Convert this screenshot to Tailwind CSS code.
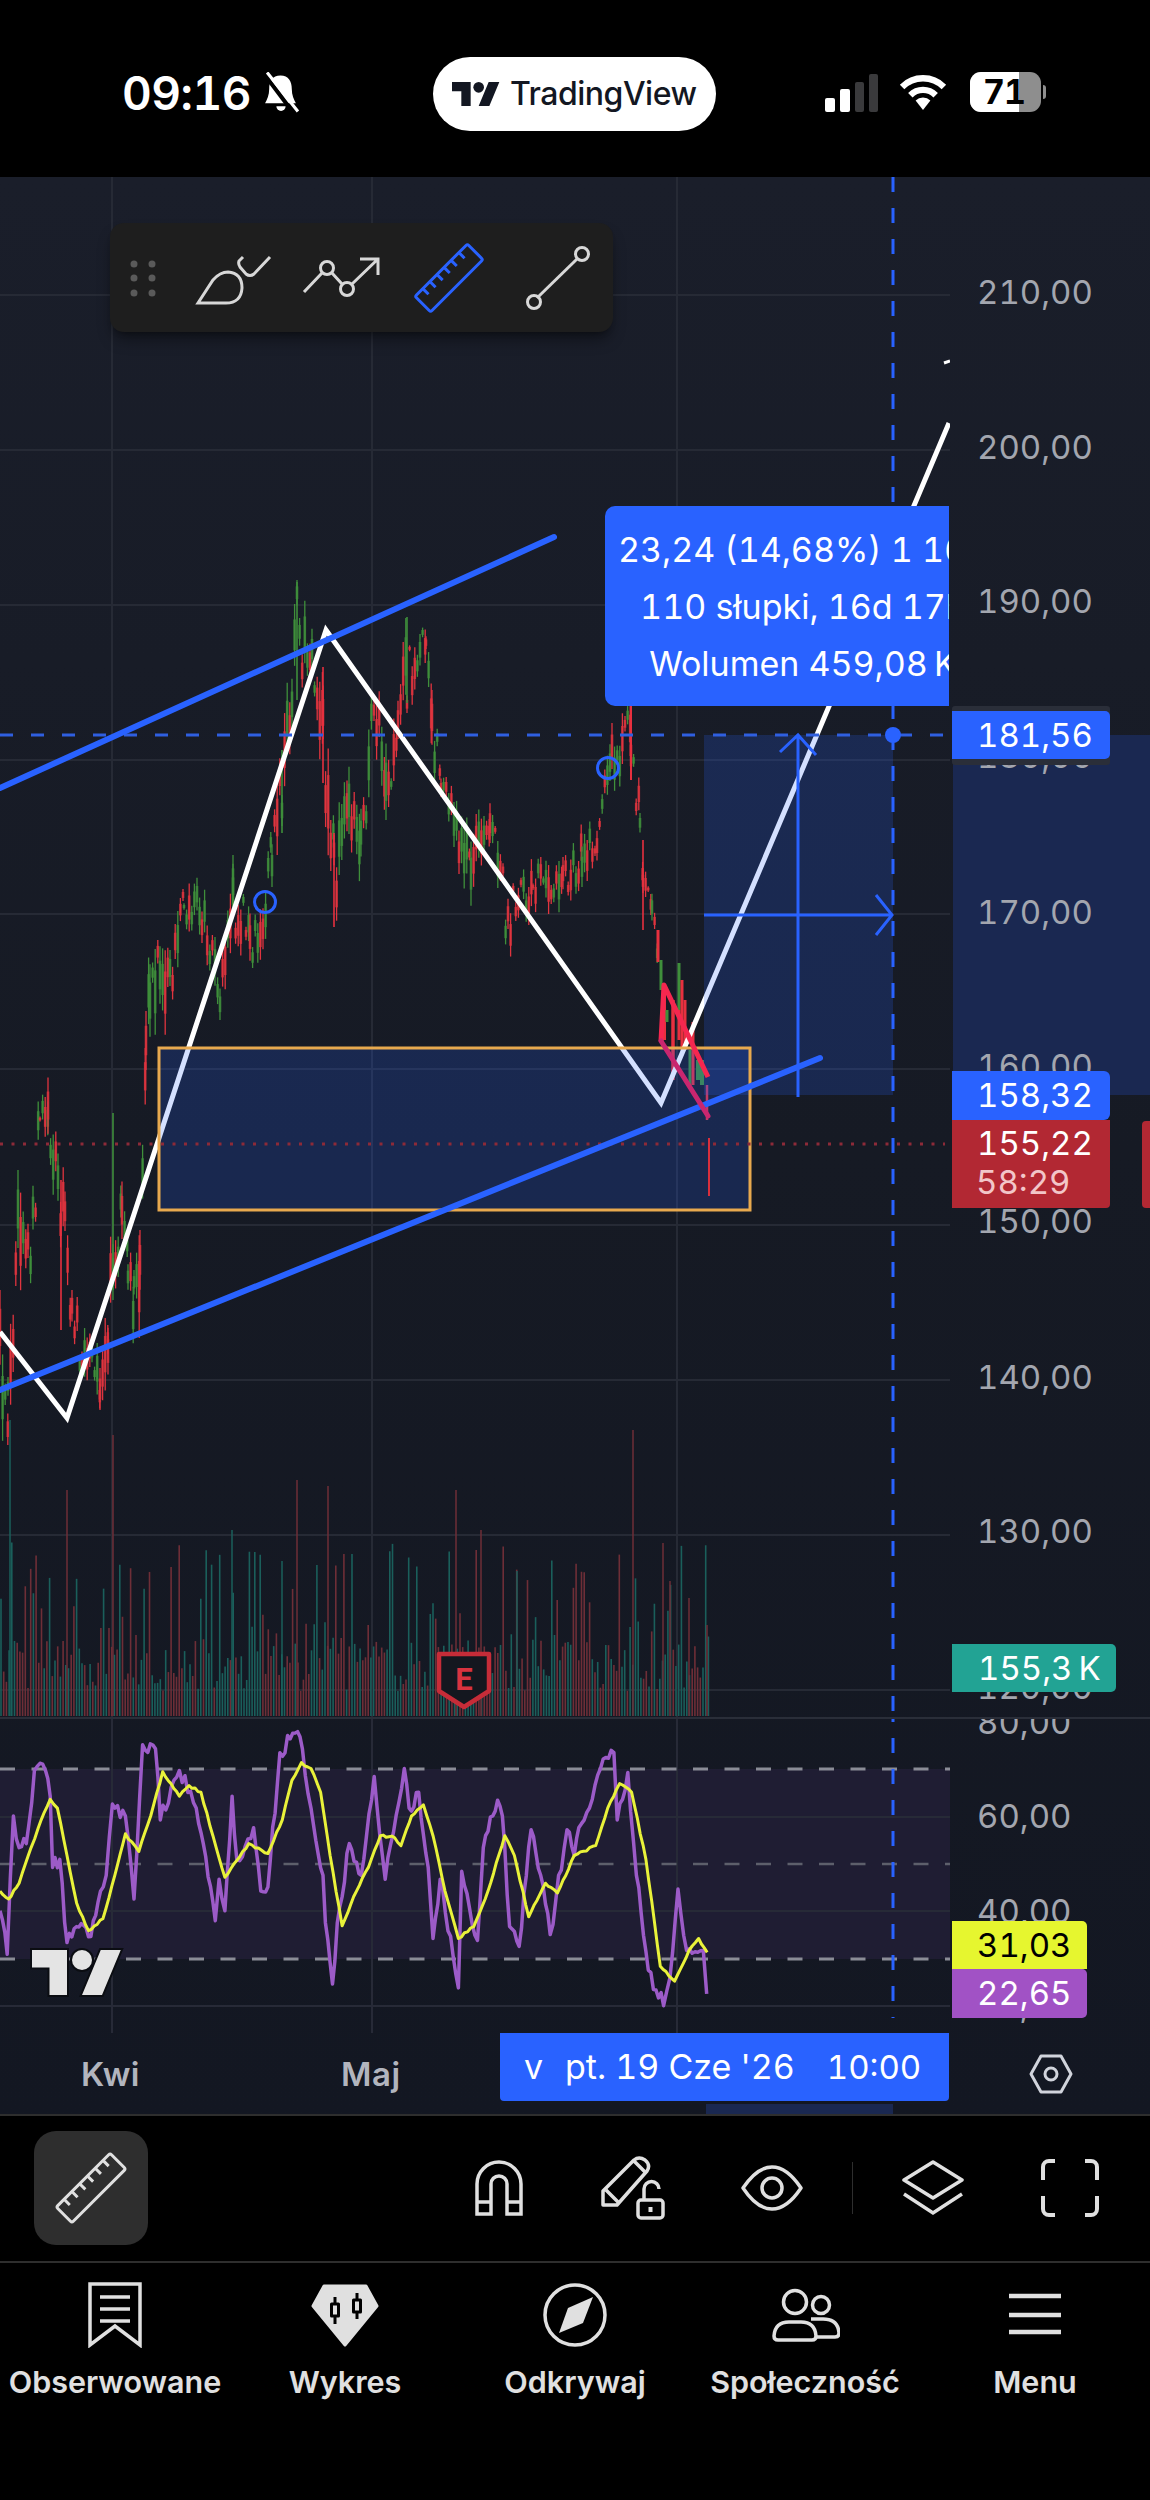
<!DOCTYPE html>
<html lang="en">
<head>
  <meta charset="UTF-8" />
  <meta name="viewport" content="width=device-width, initial-scale=1" />
  <title>TradingView</title>
  <script src="https://cdn.jsdelivr.net/npm/@tailwindcss/browser@4"></script>
</head>
<body class="bg-black font-['Inter',sans-serif] tabular-nums w-[1150px] h-[2500px] overflow-hidden">

  <!-- status bar -->
  <header class="h-[177px] bg-black flex items-start relative">
    <div class="flex items-center pl-[122px] pt-[68px] w-[433px]">
      <span class="text-white text-[46px] leading-[50px] font-semibold tracking-[-0.5px]">09:16</span>
      <svg class="ml-[11px]" width="38" height="42" viewBox="0 0 37 40">
        <path d="M18 3C10 3 7 9 7 16C7 22 5 26 3 30H33C31 26 29 22 29 16C29 9 26 3 18 3Z" fill="#fff"/>
        <path d="M14 33a4.5 4.5 0 0 0 9 0Z" fill="#fff"/>
        <path d="M1 0L31 40" stroke="#000" stroke-width="4"/>
        <path d="M5 0L35 38" stroke="#fff" stroke-width="3"/>
      </svg>
    </div>
    <div class="mt-[57px] w-[283px] h-[74px] bg-white rounded-full flex items-center pl-[19px] gap-[10px]">
      <svg width="48" height="24" viewBox="0 4 36 18" fill="#131722">
        <path d="M14 22H7V11H0V4h14v18zM28 22h-8l7.5-18h8L28 22z"/><circle cx="20" cy="8" r="4"/>
      </svg>
      <span class="text-[#131722] text-[32px] font-medium tracking-[-0.5px]">TradingView</span>
    </div>
    <div class="flex items-end ml-[109px] mt-[72px] h-[40px]">
      <div class="flex items-end gap-[5px] h-[38px]">
        <div class="w-[10px] h-[14px] bg-white rounded-[2px]"></div>
        <div class="w-[10px] h-[23px] bg-white rounded-[2px]"></div>
        <div class="w-[9px] h-[30px] bg-[#3a3a3c] rounded-[2px]"></div>
        <div class="w-[9px] h-[38px] bg-[#3a3a3c] rounded-[2px]"></div>
      </div>
      <svg class="ml-[19px] mb-[1px]" width="52" height="38" viewBox="0 0 48 36" fill="none" stroke="#fff" stroke-width="6">
        <path d="M4.2 13.2A28 28 0 0 1 43.8 13.2"/>
        <path d="M12 21A17 17 0 0 1 36 21"/>
        <path d="M24 35L17 26A10 10 0 0 1 31 26Z" fill="#fff" stroke="none"/>
      </svg>
      <div class="ml-[21px] w-[71px] h-[40px] rounded-[11px] bg-[#8e8e8e] overflow-hidden relative">
        <div class="w-[49px] h-[40px] bg-white"></div>
        <span class="absolute left-[13px] top-0 text-black text-[34px] leading-[40px] font-bold tracking-[-1px]">71</span>
      </div>
      <div class="ml-[2px] mb-[13px] w-[3px] h-[14px] bg-[#8e8e8e] rounded-r-full"></div>
    </div>
  </header>

  <!-- chart -->
  <main class="h-[1938px] bg-linear-to-b from-[#1a1e2a] via-[#161a24] to-[#131722] flex flex-col relative">
    <div class="flex h-[1540px]">
      <div class="w-[950px] relative">
        <svg width="950" height="1540" viewBox="0 177 950 1540" class="block" fill="none">
          <g stroke="#262a35" stroke-width="2">
            <path d="M0 295H950M0 450H950M0 605H950M0 760H950M0 914H950M0 1069H950M0 1225H950M0 1380H950M0 1535H950M0 1690H950"/>
            <path d="M112 177V1717M372 177V1717M677 177V1717"/>
          </g>
          <g id="candles"></g>
          <g id="volume"></g>
          <path d="M0 1332L67 1418L326 630L661 1103L949 423" stroke="#fff" stroke-width="5" stroke-linejoin="miter"/>
          <path d="M944 363L950 361" stroke="#fff" stroke-width="3"/>
          <rect x="704" y="735" width="189" height="360" fill="#2962ff" fill-opacity="0.2"/>
          <rect x="159" y="1048" width="591" height="162" fill="#2962ff" fill-opacity="0.2" stroke="#e8a94e" stroke-width="3"/>
          <path d="M798 1097V737M780 752L798 735L816 755M704 915H892M876 895L892 915L876 935" stroke="#2962ff" stroke-width="3"/>
          <path d="M0 735H950" stroke="#2f5fe0" stroke-width="3" stroke-dasharray="13 18"/>
          <path d="M893 177V1717" stroke="#2962ff" stroke-width="3" stroke-dasharray="15 16"/>
          <circle cx="893" cy="735" r="8" fill="#2962ff"/>
          <path d="M0 1144H945" stroke="#8d2a38" stroke-width="3" stroke-dasharray="3 8.5"/>
          <path d="M0 788L554 537" stroke="#2962ff" stroke-width="6" stroke-linecap="round"/>
          <path d="M0 1390L820 1058" stroke="#2962ff" stroke-width="6" stroke-linecap="round"/>
          <path d="M661 1041L664 985L708 1077" stroke="#f5274f" stroke-width="5" stroke-linejoin="round"/>
          <path d="M661 1041L708 1116" stroke="#c9266f" stroke-width="5" stroke-linecap="round"/>
          <path d="M709 1138V1196" stroke="#d92f3c" stroke-width="2"/>
          <circle cx="265" cy="902" r="10.5" stroke="#2962ff" stroke-width="3"/>
          <circle cx="608" cy="768" r="10.5" stroke="#2962ff" stroke-width="3"/>
          <!-- earnings badge -->
          <path d="M439 1654H489V1691L464 1707L439 1691Z" fill="#14171f" stroke="#c62c38" stroke-width="4.5" stroke-linejoin="round"/>
          <text x="464" y="1690" text-anchor="middle" fill="#d9333f" font-size="31" font-weight="700" font-family="Roboto">E</text>
        </svg>

        <!-- floating drawing toolbar -->
        <div class="absolute left-[110px] top-[46px] w-[503px] h-[109px] bg-[#1e1e1e] rounded-[14px] shadow-lg shadow-black/40">
          <svg width="503" height="109" viewBox="110 223 503 109" fill="none" stroke="#d8d8d8" stroke-width="3">
            <g fill="#5a5a5a" stroke="none">
              <circle cx="134" cy="264" r="3.5"/><circle cx="152" cy="264" r="3.5"/>
              <circle cx="134" cy="278" r="3.5"/><circle cx="152" cy="278" r="3.5"/>
              <circle cx="134" cy="293" r="3.5"/><circle cx="152" cy="293" r="3.5"/>
            </g>
            <path d="M198 303L213 280Q220 272 228 272Q242 273 242 288Q241 303 226 303Z"/>
            <path d="M243 257L239 261Q238 264 240 267L246 274Q250 277 254 274L270 257"/>
            <path d="M304 292L322 273M332 273L342 284M352 284L378 259M360 259H378V275"/>
            <circle cx="327" cy="268" r="6.5"/><circle cx="347" cy="289" r="6.5"/>
            <g transform="translate(449 278) rotate(-45)" stroke="#2962ff">
              <rect x="-37" y="-11" width="74" height="22" rx="2"/>
              <path d="M-26 -11V-3M-16 -11V-3M-6 -11V-3M4 -11V-3M14 -11V-3M25 -11V-3"/>
            </g>
            <path d="M537 298L577 259"/>
            <circle cx="582" cy="254" r="6.5"/><circle cx="534" cy="302" r="6.5"/>
          </svg>
        </div>

        <!-- measure tooltip -->
        <div class="absolute left-[605px] top-[329px] w-[344px] h-[200px] bg-[#2962ff] rounded-l-[10px] overflow-hidden">
          <div class="w-[396px] flex flex-col items-center pt-[15px] text-white text-[34px] leading-[57px] whitespace-nowrap">
            <span>23,24 (14,68%) 1 162</span>
            <span>110 słupki, 16d 17h</span>
            <span>Wolumen 459,08&#8239;K</span>
          </div>
        </div>
      </div>

      <!-- price axis -->
      <div class="flex-1 relative overflow-hidden text-[33px] leading-[40px] text-[#a3a6af]">
        <div class="absolute left-[3px] right-0 top-[558px] h-[360px] bg-[#1a2851]"></div>
        <span class="absolute left-[27px] top-[95px]">210,00</span>
        <span class="absolute left-[27px] top-[250px]">200,00</span>
        <span class="absolute left-[27px] top-[404px]">190,00</span>
        <span class="absolute left-[27px] top-[559px]">180,00</span>
        <span class="absolute left-[27px] top-[715px]">170,00</span>
        <span class="absolute left-[27px] top-[869px]">160,00</span>
        <span class="absolute left-[27px] top-[1024px]">150,00</span>
        <span class="absolute left-[27px] top-[1180px]">140,00</span>
        <span class="absolute left-[27px] top-[1334px]">130,00</span>
        <span class="absolute left-[27px] top-[1490px]">120,00</span>

        <div class="absolute left-[2px] top-[529px] w-[158px] h-[59px] bg-[#2a2e39] rounded-[3px]"></div>
        <div class="absolute left-[2px] top-[534px] w-[158px] h-[48px] pl-[25px] bg-[#2962ff] rounded-r-[5px] text-white leading-[48px]">181,56</div>
        <div class="absolute left-[2px] top-[894px] w-[158px] h-[49px] pl-[25px] bg-[#2962ff] rounded-r-[6px] text-white leading-[49px]">158,32</div>
        <div class="absolute left-[2px] top-[943px] w-[158px] h-[88px] pl-[25px] pt-[4px] bg-[#b22833] rounded-br-[4px] text-white leading-[39px]">
          <div>155,22</div>
          <div class="text-[#f2c6c9] -ml-[1px]">58:29</div>
        </div>
        <div class="absolute left-[192px] top-[944px] w-[10px] h-[87px] bg-[#b22833] rounded-l-[4px]"></div>
        <div class="absolute left-[2px] top-[1467px] w-[164px] h-[48px] pl-[26px] bg-[#22a394] rounded-r-[5px] text-white leading-[48px]">155,3&#8239;K</div>
      </div>
    </div>

    <div class="h-[2px] bg-[#2a2e39]"></div>

    <!-- rsi pane -->
    <div class="flex h-[314px]">
      <svg width="950" height="314" viewBox="0 1719 950 314" class="block" fill="none">
        <rect x="0" y="1769" width="950" height="190" fill="#1f1d33"/>
        <g stroke="#272a37" stroke-width="2">
          <path d="M0 1817H950M0 1911H950M0 2006H950M112 1719V2033M372 1719V2033M677 1719V2033"/>
        </g>
        <path d="M0 1769H950M0 1959H950" stroke="#8a8c96" stroke-width="3" stroke-dasharray="15 16.5"/>
        <path d="M0 1864H950" stroke="#5d5f6b" stroke-width="2.5" stroke-dasharray="15 16.5"/>
        <path d="M893 1719V2018" stroke="#2962ff" stroke-width="3" stroke-dasharray="15 16" stroke-dashoffset="12"/>
        <polyline id="rsi" stroke="#9c5bc8" stroke-width="3.5" stroke-linejoin="round"/>
        <polyline id="rsima" stroke="#e9f23a" stroke-width="3" stroke-linejoin="round"/>
        <g transform="translate(32 1950) scale(2.5)" fill="#e4e4e4" stroke="#0b0d12" stroke-width="1.6" paint-order="stroke">
          <path d="M14 18H7V7H0V0h14v18zM28 18h-8l7.5-18h8L28 18z"/><circle cx="20" cy="4" r="4"/>
        </g>
      </svg>
      <div class="flex-1 relative overflow-hidden text-[33px] leading-[40px] text-[#a3a6af]">
        <span class="absolute left-[27px] -top-[17px]">80,00</span>
        <span class="absolute left-[27px] top-[77px]">60,00</span>
        <span class="absolute left-[27px] top-[172px]">40,00</span>
        <span class="absolute left-[27px] top-[266px]">20,00</span>
        <div class="absolute left-[2px] top-[202px] w-[135px] h-[48px] pl-[25px] bg-[#e6f62f] rounded-tr-[5px] text-black leading-[48px]">31,03</div>
        <div class="absolute left-[2px] top-[250px] w-[135px] h-[49px] pl-[25px] bg-[#a152c5] rounded-r-[5px] text-white leading-[49px]">22,65</div>
      </div>
    </div>

    <!-- time axis -->
    <div class="flex-1 flex relative">
      <div class="w-[950px] relative text-[33px] leading-[40px] font-semibold tracking-[0.5px] text-[#b2b5be]">
        <span class="absolute left-[81px] top-[21px]">Kwi</span>
        <span class="absolute left-[341px] top-[21px]">Maj</span>
        <div class="absolute left-[706px] top-[71px] w-[187px] h-[10px] bg-[#1a2851]"></div>
        <div class="absolute left-[500px] top-0 w-[449px] h-[68px] bg-[#2962ff] rounded-b-[4px] pl-[24px] flex items-center text-white text-[34px] font-normal tracking-normal whitespace-nowrap">
          <span class="w-[41px]">v</span>
          <span>pt. 19 Cze '26</span>
          <span class="ml-[32px] text-[33px]">10:00</span>
        </div>
      </div>
      <div class="flex-1 relative">
        <svg class="absolute left-[79px] top-[21px]" width="44" height="40" viewBox="0 0 44 40" fill="none" stroke="#d1d4dc" stroke-width="3">
          <path d="M2 20L12 2H32L42 20L32 38H12Z" stroke-linejoin="round"/>
          <circle cx="22" cy="20" r="6"/>
        </svg>
      </div>
    </div>
  </main>

  <!-- bottom toolbar -->
  <section class="h-[147px] border-t-[2px] border-[#2e2e2e] bg-black flex items-start relative -mt-[1px]">
    <button class="mt-[15px] ml-[34px] w-[114px] h-[114px] rounded-[22px] bg-[#2e2e2e] flex items-center justify-center">
      <svg width="76" height="76" viewBox="-38 -38 76 76" fill="none" stroke="#e0e0e0" stroke-width="3">
        <g transform="rotate(-45)">
          <rect x="-38" y="-11" width="76" height="22" rx="2"/>
          <path d="M-27 -11V-3M-16 -11V-3M-5 -11V-3M6 -11V-3M17 -11V-3M28 -11V-3"/>
        </g>
      </svg>
    </button>
    <div class="ml-[327px] mt-[40px] flex items-center">
      <svg width="48" height="56" viewBox="0 0 48 56" fill="none" stroke="#e0e0e0" stroke-width="3.5">
        <path d="M2 54V24a22 22 0 0 1 44 0V54H32V24a8 8 0 0 0-16 0V54Z"/>
        <path d="M2 42H16M32 42H46"/>
      </svg>
      <svg class="ml-[78px]" width="66" height="64" viewBox="0 0 66 64" fill="none" stroke="#e0e0e0" stroke-width="3.5">
        <path d="M2 49V35L33 4Q38 0 44 4Q50 9 46 15L16 49Z" stroke-linejoin="round"/>
        <path d="M5 34L18 47M33 5L45 17"/>
        <rect x="37" y="44" width="25" height="18" rx="3"/>
        <path d="M43 44V33a7.5 7.5 0 0 1 15 0"/>
        <rect x="47.5" y="51" width="4" height="5" fill="#e0e0e0" stroke="none"/>
      </svg>
      <svg class="ml-[74px]" width="62" height="46" viewBox="0 0 62 46" fill="none" stroke="#e0e0e0" stroke-width="3.5">
        <path d="M2 23C12 8 22 2 31 2C40 2 50 8 60 23C50 38 40 44 31 44C22 44 12 38 2 23Z" stroke-linejoin="round"/>
        <circle cx="31" cy="23" r="10"/>
      </svg>
      <div class="ml-[49px] w-[1px] h-[52px] bg-[#2e2e2e]"></div>
      <svg class="ml-[49px]" width="62" height="56" viewBox="0 0 62 56" fill="none" stroke="#e0e0e0" stroke-width="3.5">
        <path d="M31 2L60 20L31 38L2 20Z" stroke-linejoin="round"/>
        <path d="M2 34L31 53L60 34"/>
      </svg>
      <svg class="ml-[77px]" width="58" height="58" viewBox="0 0 58 58" fill="none" stroke="#e0e0e0" stroke-width="4">
        <path d="M14 2H8a6 6 0 0 0-6 6V21M44 2H50a6 6 0 0 1 6 6V21M14 56H8a6 6 0 0 1-6-6V37M44 56H50a6 6 0 0 0 6-6V37"/>
      </svg>
    </div>
  </section>

  <!-- tab bar -->
  <nav class="h-[238px] border-t-[2px] border-[#2e2e2e] bg-black grid grid-cols-5 text-[#e0e0e0] text-[30.5px] leading-[36px] font-semibold text-center">
    <a class="flex flex-col items-center pt-[19px]">
      <svg width="54" height="66" viewBox="0 0 54 66" fill="none" stroke="#e0e0e0" stroke-width="3.5">
        <path d="M2 2H52V63L27 44L2 63Z"/>
        <path d="M12 15H42M12 27H42M12 39H42"/>
      </svg>
      <span class="mt-[16px] whitespace-nowrap">Obserwowane</span>
    </a>
    <a class="flex flex-col items-center pt-[19px]">
      <svg width="70" height="66" viewBox="0 0 70 66" stroke-linejoin="round">
        <path d="M14 4H56L67 24L35 63L3 24Z" fill="#e0e0e0" stroke="#e0e0e0" stroke-width="3"/>
        <path d="M25 15V42M47 11V37" stroke="#000" stroke-width="3"/>
        <rect x="21.5" y="22" width="7" height="12" fill="#e0e0e0" stroke="#000" stroke-width="3"/>
        <rect x="43.5" y="18" width="7" height="12" fill="#e0e0e0" stroke="#000" stroke-width="3"/>
      </svg>
      <span class="mt-[16px]">Wykres</span>
    </a>
    <a class="flex flex-col items-center pt-[19px]">
      <svg width="66" height="66" viewBox="0 0 66 66" fill="none">
        <circle cx="33" cy="33" r="30" stroke="#e0e0e0" stroke-width="3.5"/>
        <path d="M51 15L41 41L17 51L26 26Z" fill="#e0e0e0"/>
      </svg>
      <span class="mt-[16px]">Odkrywaj</span>
    </a>
    <a class="flex flex-col items-center pt-[19px]">
      <svg width="70" height="66" viewBox="0 0 70 66" fill="none" stroke="#e0e0e0" stroke-width="3.5">
        <circle cx="25" cy="20" r="11.5"/>
        <circle cx="51" cy="23" r="8.5"/>
        <path d="M8 58H42Q46 58 46 54Q45 40 31 40H19Q5 40 4 54Q4 58 8 58Z"/>
        <path d="M41 37H53Q68 37 69 51Q69 55 65 55H46"/>
      </svg>
      <span class="mt-[16px] whitespace-nowrap">Społeczność</span>
    </a>
    <a class="flex flex-col items-center pt-[19px]">
      <svg width="54" height="66" viewBox="0 0 54 66" fill="none" stroke="#e0e0e0" stroke-width="4.5">
        <path d="M1 14H53M1 33H53M1 50H53"/>
      </svg>
      <span class="mt-[16px]">Menu</span>
    </a>
  </nav>

  <script>
    // seeded so the picture is the same each load
    let seed = 42;
    const rnd = () => { seed = (seed * 16807) % 2147483647; return seed / 2147483647; };

    // price outline: x, high, low
    const outline = [[0,1300,1440],[8,1380,1440],[18,1180,1290],[28,1200,1300],[33,1190,1260],[40,1080,1130],[48,1070,1125],[58,1140,1240],[65,1190,1280],[72,1300,1350],[82,1310,1370],[92,1340,1395],[100,1360,1400],[108,1300,1370],[113,1180,1290],[122,1180,1250],[128,1230,1290],[134,1280,1340],[140,1240,1340],[146,1000,1060],[150,950,1030],[160,950,1020],[170,960,1040],[184,890,917],[202,887,933],[220,970,1010],[233,857,933],[250,910,960],[263,900,950],[272,833,877],[282,750,833],[292,640,720],[297,590,683],[312,613,667],[323,667,783],[334,833,927],[349,773,833],[361,817,877],[374,677,733],[386,733,810],[398,700,750],[407,617,703],[426,633,673],[432,700,767],[441,767,790],[459,817,867],[471,833,917],[490,800,833],[508,900,950],[533,867,917],[563,867,900],[582,833,877],[597,830,860],[612,733,783],[631,707,767],[640,800,833],[643,850,883],[652,900,933],[658,930,965]];
    // x, top, bottom, colour, width
    const spikes = [[113,1113,1290,'g',1.6],[297,582,700,'g',1.6],[323,667,783,'r',1.6],[334,833,927,'r',1.6],[643,840,930,'r',1.6],[631,700,780,'r',2],[407,617,703,'g',1.6],[61,1180,1330,'r',1.6],[282,750,833,'g',1.6],
      [658,930,962,'r',3],[661,960,990,'g',3],[664,985,1040,'r',4],[667,1010,1022,'g',3],[673,1000,1080,'r',3.5],[679,963,1010,'g',3],[679,1010,1040,'r',3],[682,980,1050,'r',3],[685,1000,1050,'r',3],[690,1050,1085,'g',3],[693,1022,1085,'r',3],[698,1060,1080,'g',4],[702,1060,1085,'g',4],[707,1085,1120,'r',2.5]];
    let candles = '';
    for (let i = 0; i < outline.length - 1; i++) {
      const [x0, hi0, lo0] = outline[i], [x1, hi1, lo1] = outline[i + 1];
      for (let x = x0; x < x1; x += 2.6) {
        const t = (x - x0) / (x1 - x0);
        const hi = hi0 + (hi1 - hi0) * t, lo = lo0 + (lo1 - lo0) * t;
        const spread = lo - hi + 20;
        const mid = hi + (lo - hi) * rnd();
        // keep wicks near the outline so peaks stay where they are
        const a = Math.max(mid - rnd() * spread * 0.55, hi - 10), b = Math.min(mid + rnd() * spread * 0.55, lo + 10);
        const c = rnd() > 0.48 ? '#3f8f3b' : '#e0343f';
        candles += `<path d="M${x} ${a}V${b}" stroke="${c}" stroke-width="1.3"/>`;
        candles += `<path d="M${x} ${a + (b - a) * 0.25}V${b - (b - a) * 0.25}" stroke="${c}" stroke-width="2.6" opacity="0.8"/>`;
      }
    }
    spikes.forEach(([x, a, b, k, w]) => {
      candles += `<path d="M${x} ${a}V${b}" stroke="${k == 'g' ? '#3f8f3b' : '#e8303f'}" stroke-width="${w}"/>`;
    });
    document.getElementById('candles').innerHTML = candles;

    // volume bars
    const teal = '#1a5f5b', red = '#6e2e37';
    let vol = '';
    for (let x = 1; x < 710; x += 2.7) {
      const h = rnd() > 0.72 ? 65 + rnd() * 110 : 25 + rnd() * 50;
      vol += `<path d="M${x} 1716V${1716 - h}" stroke="${rnd() > 0.5 ? teal : red}" stroke-width="1.6"/>`;
    }
    [[10,1420,teal],[67,1490,red],[113,1435,red],[232,1530,teal],[282,1561,teal],[297,1480,red],[328,1486,red],[456,1490,red],[481,1530,red],[517,1571,teal],[633,1430,red],[663,1543,red],[670,1581,red],[689,1598,red],[707,1625,red]].forEach(([x, y, c]) => {
      vol += `<path d="M${x} 1716V${y}" stroke="${c}" stroke-width="1.5"/>`;
    });
    document.getElementById('volume').innerHTML = vol;

    // rsi traced in zoomed coordinates, mapped back to page pixels
    const toPage = ([x, y]) => [x / 2.09, y / 2.53 + 1480];
    const ma = [[0,1040],[18,1060],[40,1020],[65,930],[80,880],[105,808],[120,830],[140,950],[160,1070],[185,1140],[215,1110],[240,1000],[262,895],[290,940],[315,850],[340,738],[375,800],[395,773],[420,790],[445,900],[470,1005],[520,920],[560,945],[590,860],[610,760],[630,715],[650,730],[670,790],[690,950],[715,1128],[745,1040],[770,980],[795,900],[825,905],[838,925],[860,850],[885,822],[905,900],[930,1040],[958,1160],[990,1130],[1020,1040],[1055,900],[1075,950],[1105,1105],[1140,1020],[1165,1045],[1200,950],[1245,925],[1270,830],[1295,768],[1320,790],[1350,960],[1380,1230],[1410,1268],[1440,1190],[1460,1160],[1478,1195]];
    const rsi = [[0,1090],[15,1200],[28,850],[40,930],[55,920],[72,735],[95,735],[105,800],[110,980],[125,960],[140,1170],[160,1130],[190,1155],[210,1040],[222,1000],[235,820],[262,850],[280,1060],[298,670],[325,680],[335,860],[375,735],[410,830],[425,920],[450,1115],[458,1010],[470,1090],[485,800],[495,960],[530,880],[545,1040],[560,1030],[585,690],[617,640],[632,680],[650,830],[675,1000],[680,1120],[695,1275],[705,1120],[730,920],[755,1000],[782,750],[805,1010],[845,730],[855,830],[875,790],[895,980],[905,1160],[920,1010],[958,1285],[965,990],[998,1165],[1010,930],[1040,810],[1050,850],[1065,1130],[1085,1180],[1110,885],[1130,1000],[1150,1150],[1185,885],[1200,950],[1215,870],[1255,730],[1283,690],[1290,860],[1312,740],[1330,1000],[1355,1240],[1387,1330],[1400,1260],[1417,1035],[1435,1190],[1470,1190],[1477,1300]];
    const pts = (list, wobble, step) => {
      const out = [];
      for (let i = 0; i < list.length - 1; i++) {
        const [ax, ay] = toPage(list[i]), [bx, by] = toPage(list[i + 1]);
        const n = Math.max(1, Math.round((bx - ax) / step));
        for (let j = 0; j < n; j++) {
          const t = j / n;
          out.push(`${(ax + (bx - ax) * t).toFixed(1)},${(ay + (by - ay) * t + (j ? (rnd() - 0.5) * wobble : 0)).toFixed(1)}`);
        }
      }
      out.push(toPage(list[list.length - 1]).join(','));
      return out.join(' ');
    };
    document.getElementById('rsi').setAttribute('points', pts(rsi, 16, 2.6));
    document.getElementById('rsima').setAttribute('points', pts(ma, 2.5, 3));
  </script>
</body>
</html>
